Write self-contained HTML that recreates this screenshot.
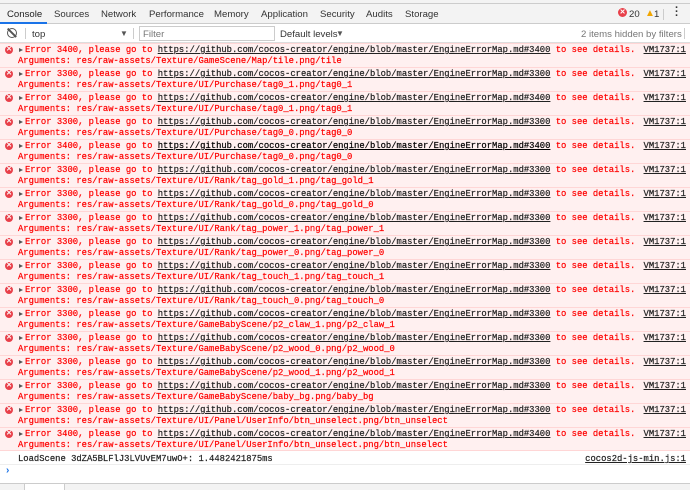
<!DOCTYPE html>
<html><head><meta charset="utf-8"><style>
*{margin:0;padding:0;box-sizing:border-box}
body{width:690px;height:490px;overflow:hidden;background:#fff;font-family:"Liberation Sans",sans-serif;position:relative}
.top{position:absolute;left:0;top:0;width:690px;height:4px;background:#f3f3f3;border-bottom:1px solid #ccc}
.tabs{position:absolute;left:0;top:4px;width:690px;height:20px;background:#f3f3f3;border-bottom:1px solid #ccc;font-size:9.6px;color:#333}
.tabs span{position:absolute;top:5px}
.tool{position:absolute;left:0;top:24px;width:690px;height:19px;background:#fff;border-bottom:1px solid #ddd;font-size:9.6px;color:#333}
.msgs{position:absolute;left:0;top:43px;width:690px}
.row{height:24px;background:#fff0f0;border-top:1px solid #ffd6d6;position:relative;font-family:"Liberation Mono",monospace;font-size:8.86px;color:#f00;line-height:11px;white-space:pre;-webkit-text-stroke:0.2px}
.row .l1{position:absolute;left:25px;top:1px}
.row .l2{position:absolute;left:18px;top:12px}
.row u{color:#222}
.row .src{position:absolute;right:4px;top:1px;color:#222;text-decoration:underline}
.ic{position:absolute;left:5px;top:2px;width:8px;height:8px;border-radius:50%;background:#e8404a;color:#fff;font:bold 7px/8px "Liberation Sans",sans-serif;text-align:center;-webkit-text-stroke:0}
.tri{position:absolute;left:19px;top:4px;width:0;height:0;border-left:4px solid #555;border-top:2.5px solid transparent;border-bottom:2.5px solid transparent}
</style></head><body>
<div class="top"></div>
<div class="tabs">
<span style="left:7px;color:#222">Console</span>
<div style="position:absolute;left:0;top:18px;width:47px;height:2px;background:#1a73e8"></div>
<span style="left:54px">Sources</span>
<span style="left:101px">Network</span>
<span style="left:149px">Performance</span>
<span style="left:214px">Memory</span>
<span style="left:261px">Application</span>
<span style="left:320px">Security</span>
<span style="left:366px">Audits</span>
<span style="left:405px">Storage</span>
<span style="left:618px;top:4px;width:9px;height:9px;border-radius:50%;background:#e8404a;color:#fff;font:bold 7px/9px sans-serif;text-align:center">✕</span>
<span style="left:629px">20</span>
<span style="left:645px;top:4px;color:#f2a600;font-size:10px">▲</span>
<span style="left:654px">1</span>
<div style="position:absolute;left:663px;top:5px;width:1px;height:11px;background:#ccc"></div>
<span style="left:675px;top:2px;font-weight:bold;font-size:11px;line-height:4px">·<br>·<br>·</span>
</div>
<div class="tool">
<div style="position:absolute;left:7px;top:4px;width:10px;height:10px;border:1.5px solid #555;border-radius:50%"></div>
<div style="position:absolute;left:11px;top:3px;width:1.5px;height:12px;background:#555;transform:rotate(-45deg)"></div>
<div style="position:absolute;left:25px;top:4px;width:1px;height:11px;background:#ccc"></div>
<span style="position:absolute;left:32px;top:5px">top</span>
<span style="position:absolute;left:120px;top:5px;font-size:8px;color:#555">▼</span>
<div style="position:absolute;left:133px;top:4px;width:1px;height:11px;background:#ccc"></div>
<div style="position:absolute;left:139px;top:2px;width:136px;height:15px;border:1px solid #ccc"></div>
<span style="position:absolute;left:143px;top:5px;color:#777">Filter</span>
<span style="position:absolute;left:280px;top:5px">Default levels</span>
<span style="position:absolute;left:336px;top:5px;font-size:8px;color:#555">▼</span>
<span style="position:absolute;left:581px;top:5px;color:#777">2 items hidden by filters</span>
<div style="position:absolute;left:684px;top:4px;width:1px;height:11px;background:#ccc"></div>
</div>
<div class="msgs">
<div class="row"><span class="ic">✕</span><span class="tri"></span><span class="l1">Error 3400, please go to <u>https://github.com/cocos-creator/engine/blob/master/EngineErrorMap.md#3400</u> to see details.</span><span class="src">VM1737:1</span><span class="l2">Arguments: res/raw-assets/Texture/GameScene/Map/tile.png/tile</span></div>
<div class="row"><span class="ic">✕</span><span class="tri"></span><span class="l1">Error 3300, please go to <u>https://github.com/cocos-creator/engine/blob/master/EngineErrorMap.md#3300</u> to see details.</span><span class="src">VM1737:1</span><span class="l2">Arguments: res/raw-assets/Texture/UI/Purchase/tag0_1.png/tag0_1</span></div>
<div class="row"><span class="ic">✕</span><span class="tri"></span><span class="l1">Error 3400, please go to <u>https://github.com/cocos-creator/engine/blob/master/EngineErrorMap.md#3400</u> to see details.</span><span class="src">VM1737:1</span><span class="l2">Arguments: res/raw-assets/Texture/UI/Purchase/tag0_1.png/tag0_1</span></div>
<div class="row"><span class="ic">✕</span><span class="tri"></span><span class="l1">Error 3300, please go to <u>https://github.com/cocos-creator/engine/blob/master/EngineErrorMap.md#3300</u> to see details.</span><span class="src">VM1737:1</span><span class="l2">Arguments: res/raw-assets/Texture/UI/Purchase/tag0_0.png/tag0_0</span></div>
<div class="row"><span class="ic">✕</span><span class="tri"></span><span class="l1">Error 3400, please go to <u style="color:#000">https://github.com/cocos-creator/engine/blob/master/EngineErrorMap.md#3400</u> to see details.</span><span class="src">VM1737:1</span><span class="l2">Arguments: res/raw-assets/Texture/UI/Purchase/tag0_0.png/tag0_0</span></div>
<div class="row"><span class="ic">✕</span><span class="tri"></span><span class="l1">Error 3300, please go to <u>https://github.com/cocos-creator/engine/blob/master/EngineErrorMap.md#3300</u> to see details.</span><span class="src">VM1737:1</span><span class="l2">Arguments: res/raw-assets/Texture/UI/Rank/tag_gold_1.png/tag_gold_1</span></div>
<div class="row"><span class="ic">✕</span><span class="tri"></span><span class="l1">Error 3300, please go to <u>https://github.com/cocos-creator/engine/blob/master/EngineErrorMap.md#3300</u> to see details.</span><span class="src">VM1737:1</span><span class="l2">Arguments: res/raw-assets/Texture/UI/Rank/tag_gold_0.png/tag_gold_0</span></div>
<div class="row"><span class="ic">✕</span><span class="tri"></span><span class="l1">Error 3300, please go to <u>https://github.com/cocos-creator/engine/blob/master/EngineErrorMap.md#3300</u> to see details.</span><span class="src">VM1737:1</span><span class="l2">Arguments: res/raw-assets/Texture/UI/Rank/tag_power_1.png/tag_power_1</span></div>
<div class="row"><span class="ic">✕</span><span class="tri"></span><span class="l1">Error 3300, please go to <u>https://github.com/cocos-creator/engine/blob/master/EngineErrorMap.md#3300</u> to see details.</span><span class="src">VM1737:1</span><span class="l2">Arguments: res/raw-assets/Texture/UI/Rank/tag_power_0.png/tag_power_0</span></div>
<div class="row"><span class="ic">✕</span><span class="tri"></span><span class="l1">Error 3300, please go to <u>https://github.com/cocos-creator/engine/blob/master/EngineErrorMap.md#3300</u> to see details.</span><span class="src">VM1737:1</span><span class="l2">Arguments: res/raw-assets/Texture/UI/Rank/tag_touch_1.png/tag_touch_1</span></div>
<div class="row"><span class="ic">✕</span><span class="tri"></span><span class="l1">Error 3300, please go to <u>https://github.com/cocos-creator/engine/blob/master/EngineErrorMap.md#3300</u> to see details.</span><span class="src">VM1737:1</span><span class="l2">Arguments: res/raw-assets/Texture/UI/Rank/tag_touch_0.png/tag_touch_0</span></div>
<div class="row"><span class="ic">✕</span><span class="tri"></span><span class="l1">Error 3300, please go to <u>https://github.com/cocos-creator/engine/blob/master/EngineErrorMap.md#3300</u> to see details.</span><span class="src">VM1737:1</span><span class="l2">Arguments: res/raw-assets/Texture/GameBabyScene/p2_claw_1.png/p2_claw_1</span></div>
<div class="row"><span class="ic">✕</span><span class="tri"></span><span class="l1">Error 3300, please go to <u>https://github.com/cocos-creator/engine/blob/master/EngineErrorMap.md#3300</u> to see details.</span><span class="src">VM1737:1</span><span class="l2">Arguments: res/raw-assets/Texture/GameBabyScene/p2_wood_0.png/p2_wood_0</span></div>
<div class="row"><span class="ic">✕</span><span class="tri"></span><span class="l1">Error 3300, please go to <u>https://github.com/cocos-creator/engine/blob/master/EngineErrorMap.md#3300</u> to see details.</span><span class="src">VM1737:1</span><span class="l2">Arguments: res/raw-assets/Texture/GameBabyScene/p2_wood_1.png/p2_wood_1</span></div>
<div class="row"><span class="ic">✕</span><span class="tri"></span><span class="l1">Error 3300, please go to <u>https://github.com/cocos-creator/engine/blob/master/EngineErrorMap.md#3300</u> to see details.</span><span class="src">VM1737:1</span><span class="l2">Arguments: res/raw-assets/Texture/GameBabyScene/baby_bg.png/baby_bg</span></div>
<div class="row"><span class="ic">✕</span><span class="tri"></span><span class="l1">Error 3300, please go to <u>https://github.com/cocos-creator/engine/blob/master/EngineErrorMap.md#3300</u> to see details.</span><span class="src">VM1737:1</span><span class="l2">Arguments: res/raw-assets/Texture/UI/Panel/UserInfo/btn_unselect.png/btn_unselect</span></div>
<div class="row" style="border-bottom:1px solid #ffd6d6"><span class="ic">✕</span><span class="tri"></span><span class="l1">Error 3400, please go to <u>https://github.com/cocos-creator/engine/blob/master/EngineErrorMap.md#3400</u> to see details.</span><span class="src">VM1737:1</span><span class="l2">Arguments: res/raw-assets/Texture/UI/Panel/UserInfo/btn_unselect.png/btn_unselect</span></div>
<div style="position:relative;height:14px;border-bottom:1px solid #eee;font-family:'Liberation Mono',monospace;font-size:8.86px;line-height:12px;color:#222;white-space:pre;-webkit-text-stroke:0.2px"><span style="position:absolute;left:18px;top:2px">LoadScene 3dZA5BLFlJ3LVUvEM7uwO+: 1.4482421875ms</span><span style="position:absolute;right:4px;top:2px;text-decoration:underline">cocos2d-js-min.js:1</span></div>
<div style="position:relative;height:15px;color:#1a73e8;font-size:10px;font-weight:bold"><span style="position:absolute;left:6px;top:0px">›</span></div>
</div>
<div style="position:absolute;left:0;top:483px;width:690px;height:7px;background:#f3f3f3;border-top:1px solid #ccc"></div>
<div style="position:absolute;left:24px;top:484px;width:41px;height:6px;background:#fff;border-left:1px solid #ccc;border-right:1px solid #ccc"></div>
</body></html>
